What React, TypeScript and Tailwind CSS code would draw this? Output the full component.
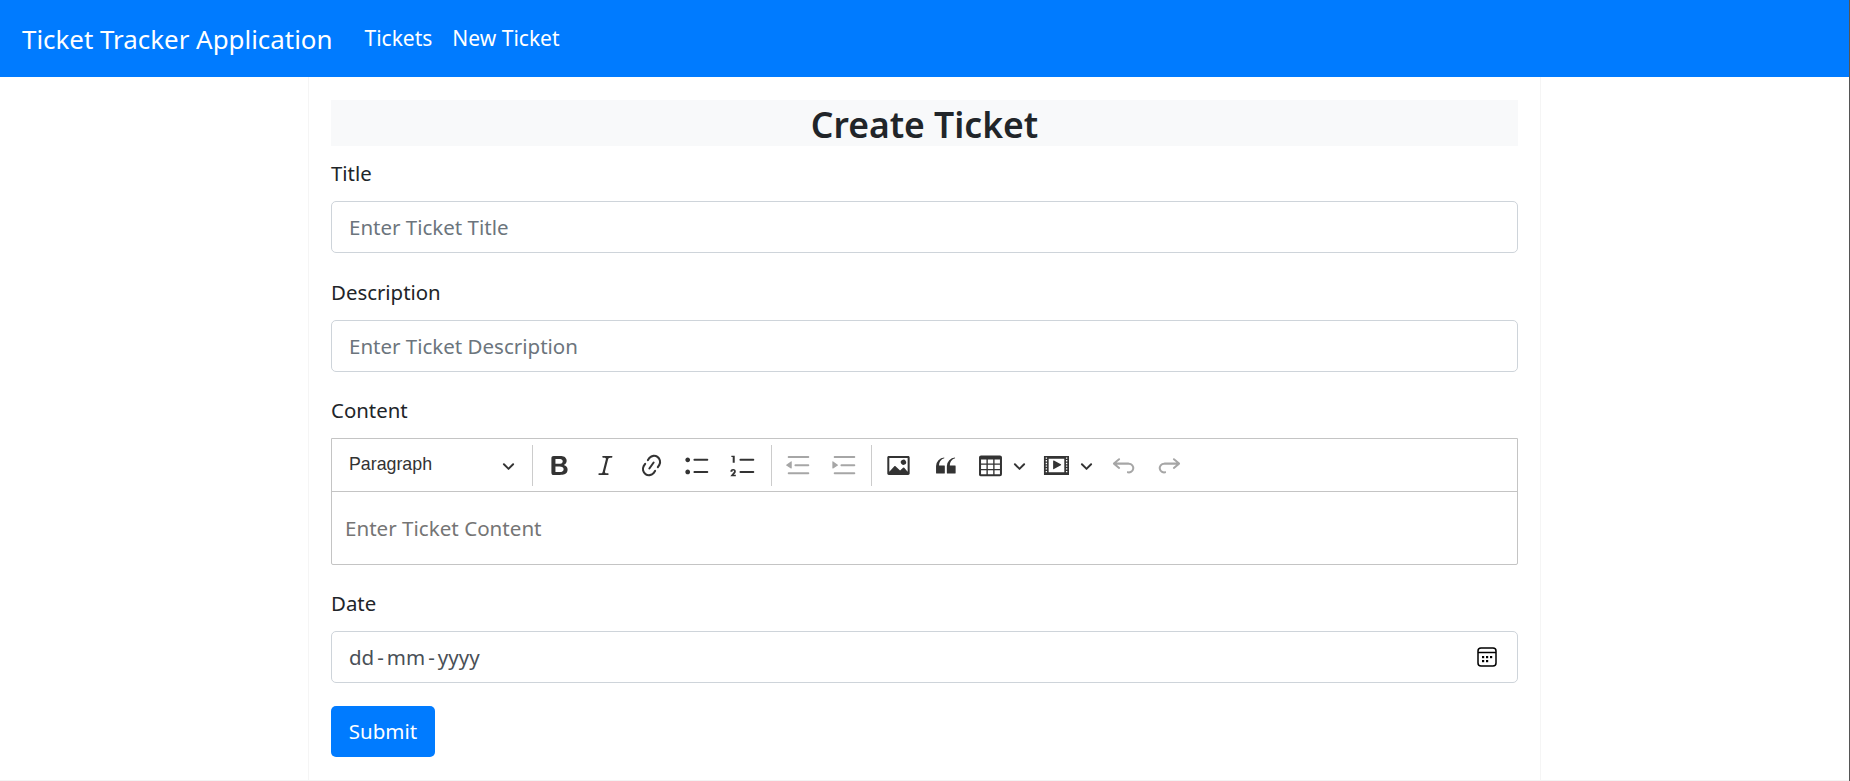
import { ReactNode } from "react";

const font = { fontFamily: '"Noto Sans", sans-serif' };

const paths = {
  bold: "M10.187 17H5.773c-.637 0-1.092-.138-1.364-.415-.273-.277-.409-.718-.409-1.323V4.738c0-.617.14-1.062.419-1.332.279-.27.73-.406 1.354-.406h4.68c.69 0 1.288.041 1.793.124.506.083.96.242 1.36.478.341.197.644.447.906.75a3.262 3.262 0 0 1 .808 2.162c0 1.401-.722 2.426-2.167 3.075C15.05 10.175 16 11.315 16 13.01a3.756 3.756 0 0 1-2.296 3.504 6.1 6.1 0 0 1-1.517.377c-.571.073-1.238.11-2 .11zm-.217-6.217H7v4.087h3.069c1.977 0 2.965-.69 2.965-2.072 0-.707-.256-1.22-.768-1.537-.512-.319-1.277-.478-2.296-.478zM7 5.13v3.619h2.606c.709 0 1.256-.066 1.642-.198.385-.132.68-.385.882-.76.16-.265.239-.562.239-.891 0-.704-.258-1.172-.774-1.404-.516-.233-1.303-.35-2.363-.35H7z",
  italic: "m9.586 14.633.021.004c-.036.335.095.655.393.962.082.083.173.15.274.201h1.474a.6.6 0 1 1 0 1.2H5.304a.6.6 0 0 1 0-1.2h1.15c.474-.07.809-.182 1.005-.334.157-.122.291-.32.404-.597l2.416-9.55a1.053 1.053 0 0 0-.281-.823 1.12 1.12 0 0 0-.442-.296H8.15a.6.6 0 0 1 0-1.2h6.443a.6.6 0 1 1 0 1.2h-1.195c-.376.056-.65.155-.823.296-.215.175-.423.439-.623.79l-2.366 9.347z",
  link: "m11.077 15 .991-1.416a.75.75 0 1 1 1.229.86l-1.148 1.64a.748.748 0 0 1-.217.206 5.251 5.251 0 0 1-8.503-5.955.741.741 0 0 1 .12-.274l1.147-1.639a.75.75 0 1 1 1.228.86L4.933 10.7l.006.003a3.75 3.75 0 0 0 6.132 4.294l.006.004zm5.494-5.335a.748.748 0 0 1-.12.274l-1.147 1.639a.75.75 0 1 1-1.228-.86l.86-1.23a3.75 3.75 0 0 0-6.144-4.301l-.86 1.229a.75.75 0 0 1-1.229-.86l1.148-1.64a.748.748 0 0 1 .217-.206 5.251 5.251 0 0 1 8.503 5.955zm-4.563-2.532a.75.75 0 0 1 .184 1.045l-3.155 4.505a.75.75 0 1 1-1.229-.86l3.155-4.506a.75.75 0 0 1 1.045-.184z",
  bullets: "M7 5.75c0 .414.336.75.75.75h9.5a.75.75 0 1 0 0-1.5h-9.5a.75.75 0 0 0-.75.75zm-6 0C1 4.784 1.777 4 2.75 4c.966 0 1.75.777 1.75 1.75 0 .966-.777 1.75-1.75 1.75C1.784 7.5 1 6.723 1 5.75zm6 9c0 .414.336.75.75.75h9.5a.75.75 0 1 0 0-1.5h-9.5a.75.75 0 0 0-.75.75zm-6 0c0-.966.777-1.75 1.75-1.75.966 0 1.75.777 1.75 1.75 0 .966-.777 1.75-1.75 1.75-.966 0-1.75-.777-1.75-1.75z",
  numbers: "M7 5.75c0 .414.336.75.75.75h9.5a.75.75 0 1 0 0-1.5h-9.5a.75.75 0 0 0-.75.75zM3.5 3v5H2V3.7H1v-1h2.5V3zM.343 17.857l2.59-3.257H2.92a.6.6 0 1 0-1.04 0H.302a2 2 0 1 1 3.995 0h-.001c-.048.405-.16.734-.333.988-.175.254-.59.692-1.244 1.312H4.3v1h-4l.043-.043zM7 14.75a.75.75 0 0 1 .75-.75h9.5a.75.75 0 1 1 0 1.5h-9.5a.75.75 0 0 1-.75-.75z",
  outdent: "M2 3.75c0 .414.336.75.75.75h14.5a.75.75 0 1 0 0-1.5H2.75a.75.75 0 0 0-.75.75zm5 6c0 .414.336.75.75.75h9.5a.75.75 0 1 0 0-1.5h-9.5a.75.75 0 0 0-.75.75zM2.75 16.5h14.5a.75.75 0 1 0 0-1.5H2.75a.75.75 0 1 0 0 1.5zM4.368 6.95.98 9.358a.4.4 0 0 0 .013.661l3.39 2.207A.4.4 0 0 0 5 11.892V7.275a.4.4 0 0 0-.632-.326z",
  indent: "M2 3.75c0 .414.336.75.75.75h14.5a.75.75 0 1 0 0-1.5H2.75a.75.75 0 0 0-.75.75zm5 6c0 .414.336.75.75.75h9.5a.75.75 0 1 0 0-1.5h-9.5a.75.75 0 0 0-.75.75zM2.75 16.5h14.5a.75.75 0 1 0 0-1.5H2.75a.75.75 0 1 0 0 1.5zM1.632 6.95 5.02 9.358a.4.4 0 0 1-.013.661l-3.39 2.207A.4.4 0 0 1 1 11.892V7.275a.4.4 0 0 1 .632-.326z",
  image: "M6.91 10.54c.26-.23.64-.21.88.03l3.36 3.14 2.23-2.06a.64.64 0 0 1 .87 0l2.52 2.97V4.5H3.2v10.12l3.71-4.08zm10.27-7.51c.6 0 1.09.47 1.09 1.05v11.84c0 .59-.49 1.06-1.09 1.06H2.79c-.6 0-1.09-.47-1.09-1.06V4.08c0-.58.49-1.05 1.1-1.05h14.38zm-5.22 5.56a1.96 1.96 0 1 1 3.4-1.96 1.96 1.96 0 0 1-3.4 1.96z",
  quote: "M3 10.423a6.5 6.5 0 0 1 6.056-6.408l.038.67C6.448 5.423 5.354 7.663 5.22 10H9c.552 0 .5.432.5.986v4.511c0 .554-.448.503-1 .503h-5c-.552 0-.5-.449-.5-1.003v-4.574zm8 0a6.5 6.5 0 0 1 6.056-6.408l.038.67c-2.646.739-3.74 2.979-3.873 5.315H17c.552 0 .5.432.5.986v4.511c0 .554-.448.503-1 .503h-5c-.552 0-.5-.449-.5-1.003v-4.574z",
  table: "M3 5.5v3h4v-3H3zm0 4v3h4v-3H3zm0 4v3h4v-3H3zm5 3h4v-3H8v3zm5 0h4v-3h-4v3zm4-4v-3h-4v3h4zm0-4v-3h-4v3h4zm1.5 8a1.5 1.5 0 0 1-1.5 1.5H3A1.5 1.5 0 0 1 1.5 17V4c0-.828.67-1.5 1.5-1.5h14c.83 0 1.5.672 1.5 1.5v13zM8 12.5h4v-3H8v3zm0-4h4v-3H8v3z",
  media: "M18.68 3.03c.6 0 .59-.03.59.55v12.84c0 .59.01.56-.59.56H1.29c-.6 0-.59.03-.59-.56V3.58c0-.58-.01-.55.6-.55h17.38zM15.77 15V5H4.2v10h11.57zM2 4v1h1V4H2zm0 2v1h1V6H2zm0 2v1h1V8H2zm0 2v1h1v-1H2zm0 2v1h1v-1H2zm0 2v1h1v-1H2zM17 4v1h1V4h-1zm0 2v1h1V6h-1zm0 2v1h1V8h-1zm0 2v1h1v-1h-1zm0 2v1h1v-1h-1zm0 2v1h1v-1h-1zM7.5 6.677a.4.4 0 0 1 .593-.351l5.133 2.824a.4.4 0 0 1 0 .7l-5.133 2.824a.4.4 0 0 1-.593-.35V6.676z",
  undo: "m5.042 9.367 2.189 1.837a.75.75 0 0 1-.965 1.149l-3.788-3.18a.747.747 0 0 1-.21-.284.75.75 0 0 1 .17-.945L6.23 4.762a.75.75 0 1 1 .964 1.15L4.863 7.866h8.917A.75.75 0 0 1 14 7.9a4 4 0 1 1-1.477 7.718l.344-1.489a2.5 2.5 0 1 0 1.094-4.73l.008-.032H5.042z",
  redo: "m14.958 9.367-2.189 1.837a.75.75 0 0 0 .965 1.149l3.788-3.18a.747.747 0 0 0 .21-.284.75.75 0 0 0-.17-.945L13.77 4.762a.75.75 0 1 0-.964 1.15l2.331 1.955H6.22A.75.75 0 0 0 6 7.9a4 4 0 1 0 1.477 7.718l-.344-1.489A2.5 2.5 0 1 1 6.039 9.4l-.008-.032h8.927z",
};

function ToolIcon({ d, disabled, className }: { d: string; disabled?: boolean; className?: string }) {
  return (
    <span className={`flex h-[27px] items-center justify-center ${className ?? "w-[46px]"}`}>
      <svg viewBox="0 0 20 20" className={`h-[27px] w-[27px] ${disabled ? "text-[#a6a6a6]" : "text-[#333333]"}`} fill="currentColor">
        <path d={d} />
      </svg>
    </span>
  );
}

function Chevron({ className }: { className?: string }) {
  return (
    <svg viewBox="0 0 10 10" className={`h-[13px] w-[13px] text-[#333333] ${className ?? ""}`} fill="currentColor">
      <path d="M.941 4.523a.75.75 0 1 1 1.06-1.06l3.006 3.005 3.005-3.005a.75.75 0 1 1 1.06 1.06l-3.549 3.55a.75.75 0 0 1-1.168-.136L.941 4.523z" />
    </svg>
  );
}

function Divider({ className }: { className: string }) {
  return <span className={`h-[41px] w-px bg-[#cccccc] ${className}`} />;
}

function Field({ label, children, className }: { label: string; children: ReactNode; className: string }) {
  return (
    <div className={className}>
      <label className="mb-[13px] block text-[20.4px] leading-[30px] text-[#212529]">{label}</label>
      {children}
    </div>
  );
}

const inputClass =
  "block h-[52px] w-full rounded-[5px] border border-[#ced4da] bg-white px-[17px] text-[20.5px] text-[#495057] outline-none placeholder:text-[#6c757d]";

export default function App() {
  return (
    <div className="flex h-[781px] flex-col overflow-hidden border-r border-[#555555] bg-white" style={font}>
      <nav className="flex h-[77px] shrink-0 items-center bg-[#007bff] pl-[22px] text-white">
        <a className="text-[25.9px] leading-[38px]">Ticket Tracker Application</a>
        <ul className="mt-px ml-[32px] flex gap-[20px] text-[21px]">
          <li>Tickets</li>
          <li>New Ticket</li>
        </ul>
      </nav>

      <main className="flex flex-1 justify-center border-b border-[#f3f3f3]">
        <div className="w-[1233px] border-x border-[#f5f5f5] pt-[23px] pr-[22px] pl-[22px]">
          <h1 className="h-[46px] bg-[#f8f9fa] text-center text-[35.5px] leading-[48px] font-semibold text-[#212529]">
            Create Ticket
          </h1>

          <form>
            <Field label="Title" className="mt-[12px]">
              <input className={inputClass} placeholder="Enter Ticket Title" />
            </Field>
            <Field label="Description" className="mt-[24px]">
              <input className={inputClass} placeholder="Enter Ticket Description" />
            </Field>
            <Field label="Content" className="mt-[23px]">
              <div className="rounded-b-[2px] border border-[#c4c4c4] text-[#333333]">
                <div className="flex h-[53px] items-center border-b border-[#c4c4c4]">
                  <div className="flex w-[200px] items-center justify-between pr-[17px] pl-[17px] text-[17.8px]" style={{ fontFamily: '"Liberation Sans", sans-serif' }}>
                    <span className="-mt-px">Paragraph</span>
                    <Chevron />
                  </div>
                  <Divider className="mr-[3px]" />
                  <ToolIcon d={paths.bold} />
                  <ToolIcon d={paths.italic} />
                  <ToolIcon d={paths.link} />
                  <ToolIcon d={paths.bullets} />
                  <ToolIcon d={paths.numbers} />
                  <Divider className="ml-[5px] mr-[3px]" />
                  <ToolIcon d={paths.outdent} disabled />
                  <ToolIcon d={paths.indent} disabled />
                  <Divider className="ml-[4px] mr-[3px]" />
                  <ToolIcon d={paths.image} className="w-[46px]" />
                  <ToolIcon d={paths.quote} className="w-[48px]" />
                  <ToolIcon d={paths.table} className="w-[42px]" />
                  <Chevron className="ml-[2px] mr-[9px]" />
                  <ToolIcon d={paths.media} className="w-[42px]" />
                  <Chevron className="ml-[3px] mr-[7px]" />
                  <ToolIcon d={paths.undo} disabled />
                  <ToolIcon d={paths.redo} disabled />
                </div>
                <div className="flex h-[72px] items-center px-[13px] text-[20.6px] text-[#757575]">
                  Enter Ticket Content
                </div>
              </div>
            </Field>
            <Field label="Date" className="mt-[23px]">
              <div className={`${inputClass} flex items-center justify-between pr-[20px]`}>
                <span className="flex">
                  <span>dd</span>
                  <span className="mx-[3px]">-</span>
                  <span>mm</span>
                  <span className="mx-[3px]">-</span>
                  <span>yyyy</span>
                </span>
                <svg viewBox="0 0 20 20" className="h-5 w-5 text-black" fill="none" stroke="currentColor" strokeWidth="1.5">
                  <rect x="1" y="1" width="18" height="18" rx="3" />
                  <path d="M1 5.5h18" />
                  <g fill="currentColor" stroke="none">
                    <rect x="5" y="9" width="2.2" height="2.2" />
                    <rect x="9" y="9" width="2.2" height="2.2" />
                    <rect x="13" y="9" width="2.2" height="2.2" />
                    <rect x="5" y="13" width="2.2" height="2.2" />
                    <rect x="9" y="13" width="2.2" height="2.2" />
                  </g>
                </svg>
              </div>
            </Field>
            <button type="button" className="mt-[23px] h-[51px] w-[104px] rounded-[5px] bg-[#007bff] text-center text-[20.5px] text-white">
              Submit
            </button>
          </form>
        </div>
      </main>
    </div>
  );
}
